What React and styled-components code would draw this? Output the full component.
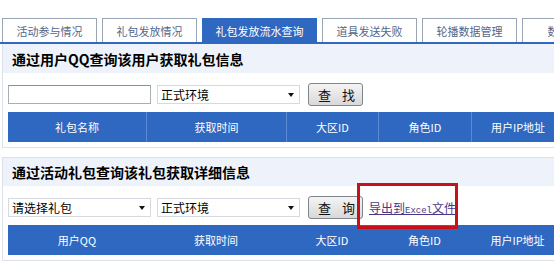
import React from "react";
import styled, { createGlobalStyle } from "styled-components";

const GlobalStyle = createGlobalStyle`
  * { box-sizing: border-box; }
  html, body, #root { margin: 0; padding: 0; }
  body {
    background: #fff;
    overflow: hidden;
    font-family: "Noto Sans CJK SC", "Liberation Sans", sans-serif;
    color: #000;
  }
`;

const Page = styled.div`
  width: 600px;
`;

const TabBar = styled.div`
  display: flex;
  gap: 5px;
  padding: 18px 0 0 2px;
  border-bottom: 2px solid #2f68c1;
`;

const Tab = styled.div`
  width: ${(p) => p.w}px;
  height: 24px;
  flex: none;
  display: flex;
  align-items: center;
  justify-content: center;
  white-space: nowrap;
  font-size: 11px;
  border: 1px solid ${(p) => (p.active ? "#2f68c1" : "#9aa6b8")};
  border-bottom: none;
  background: ${(p) => (p.active ? "#2f68c1" : "#fff")};
  color: ${(p) => (p.active ? "#fff" : "#52668c")};
`;

const Section = styled.div`
  position: relative;
  margin: ${(p) => p.mt}px 0 0 2px;
  border: 1px solid #dde2ea;
  border-top: ${(p) => (p.first ? "none" : "1px solid #dde2ea")};
  padding-bottom: 5px;
`;

const SectionHead = styled.div`
  height: ${(p) => p.h}px;
  display: flex;
  align-items: center;
  padding-left: 9px;
  background: #eef3fb;
  font-size: 14px;
  font-weight: bold;
`;

const Controls = styled.div`
  display: flex;
  align-items: center;
  gap: 6px;
  height: 23px;
  margin: ${(p) => p.mt}px 0 0 5px;
`;

const TextInput = styled.input`
  width: 143px;
  height: 19px;
  border: 1px solid #a8aeb8;
  border-top-color: #8a909a;
  padding: 0 3px;
  font-size: 12px;
  outline: none;
`;

const SelectBox = styled.div`
  width: 143px;
  height: 19px;
  display: flex;
  align-items: center;
  justify-content: space-between;
  border: 1px solid #d6d9de;
  padding: 0 5px 0 3px;
  font-size: 12px;
  background: #fff;
`;

const Caret = styled.span`
  width: 0;
  height: 0;
  border-left: 3px solid transparent;
  border-right: 3px solid transparent;
  border-top: 4px solid #111;
`;

const Button = styled.button`
  width: 55px;
  height: 23px;
  margin-left: 2px;
  display: flex;
  align-items: center;
  justify-content: space-between;
  padding: 0 7px 0 9px;
  border: 1px solid #7f858d;
  border-radius: 3px;
  background: linear-gradient(#f4f4f4, #d8d8d8);
  font-family: "Noto Sans CJK SC", sans-serif;
  font-size: 13px;
  color: #111;
`;

const ExportLink = styled.a`
  font-size: 12px;
  color: #4a3689;
  text-decoration: underline;
  white-space: nowrap;
`;

const Mono = styled.span`
  font-family: "Liberation Mono", monospace;
  font-size: 9px;
`;

const Highlight = styled.div`
  position: absolute;
  left: 354px;
  top: 25px;
  width: 101px;
  height: 46px;
  border: 3px solid #c8101a;
  pointer-events: none;
`;

const TableHead = styled.div`
  display: grid;
  grid-template-columns: 138px 140px 92px 93px 93px;
  height: 30px;
  margin: 6px 0 0 5px;
  background: #2f68c1;
`;

const HeadCell = styled.div`
  display: flex;
  align-items: center;
  justify-content: center;
  color: #fff;
  font-size: 11px;
  white-space: nowrap;
  border-left: ${(p) => (p.divider ? "1px solid #5b8ad4" : "none")};
`;

const columns1 = ["礼包名称", "获取时间", "大区ID", "角色ID", "用户IP地址"];
const columns2 = ["用户QQ", "获取时间", "大区ID", "角色ID", "用户IP地址"];

const tabs = [
  { label: "活动参与情况", w: 95 },
  { label: "礼包发放情况", w: 95 },
  { label: "礼包发放流水查询", w: 115, active: true },
  { label: "道具发送失败", w: 95 },
  { label: "轮播数据管理", w: 95 },
  { label: "数据统计", w: 95 },
];

function Select({ children }) {
  return (
    <SelectBox>
      <span>{children}</span>
      <Caret />
    </SelectBox>
  );
}

export default function App() {
  return (
    <Page>
      <GlobalStyle />
      <TabBar>
        {tabs.map((t) => (
          <Tab key={t.label} w={t.w} active={t.active}>
            {t.label}
          </Tab>
        ))}
      </TabBar>

      <Section first mt={0}>
        <SectionHead h={29}>通过用户QQ查询该用户获取礼包信息</SectionHead>
        <Controls mt={10}>
          <TextInput />
          <Select>正式环境</Select>
          <Button>
            <span>查</span>
            <span>找</span>
          </Button>
        </Controls>
        <TableHead>
          {columns1.map((c, i) => (
            <HeadCell key={c} divider={i > 0}>
              {c}
            </HeadCell>
          ))}
        </TableHead>
      </Section>

      <Section mt={9}>
        <SectionHead h={28}>通过活动礼包查询该礼包获取详细信息</SectionHead>
        <Controls mt={10}>
          <Select>请选择礼包</Select>
          <Select>正式环境</Select>
          <Button>
            <span>查</span>
            <span>询</span>
          </Button>
          <ExportLink href="#">
            导出到<Mono>Excel</Mono>文件
          </ExportLink>
        </Controls>
        <TableHead>
          {columns2.map((c) => (
            <HeadCell key={c}>{c}</HeadCell>
          ))}
        </TableHead>
        <Highlight />
      </Section>
    </Page>
  );
}
